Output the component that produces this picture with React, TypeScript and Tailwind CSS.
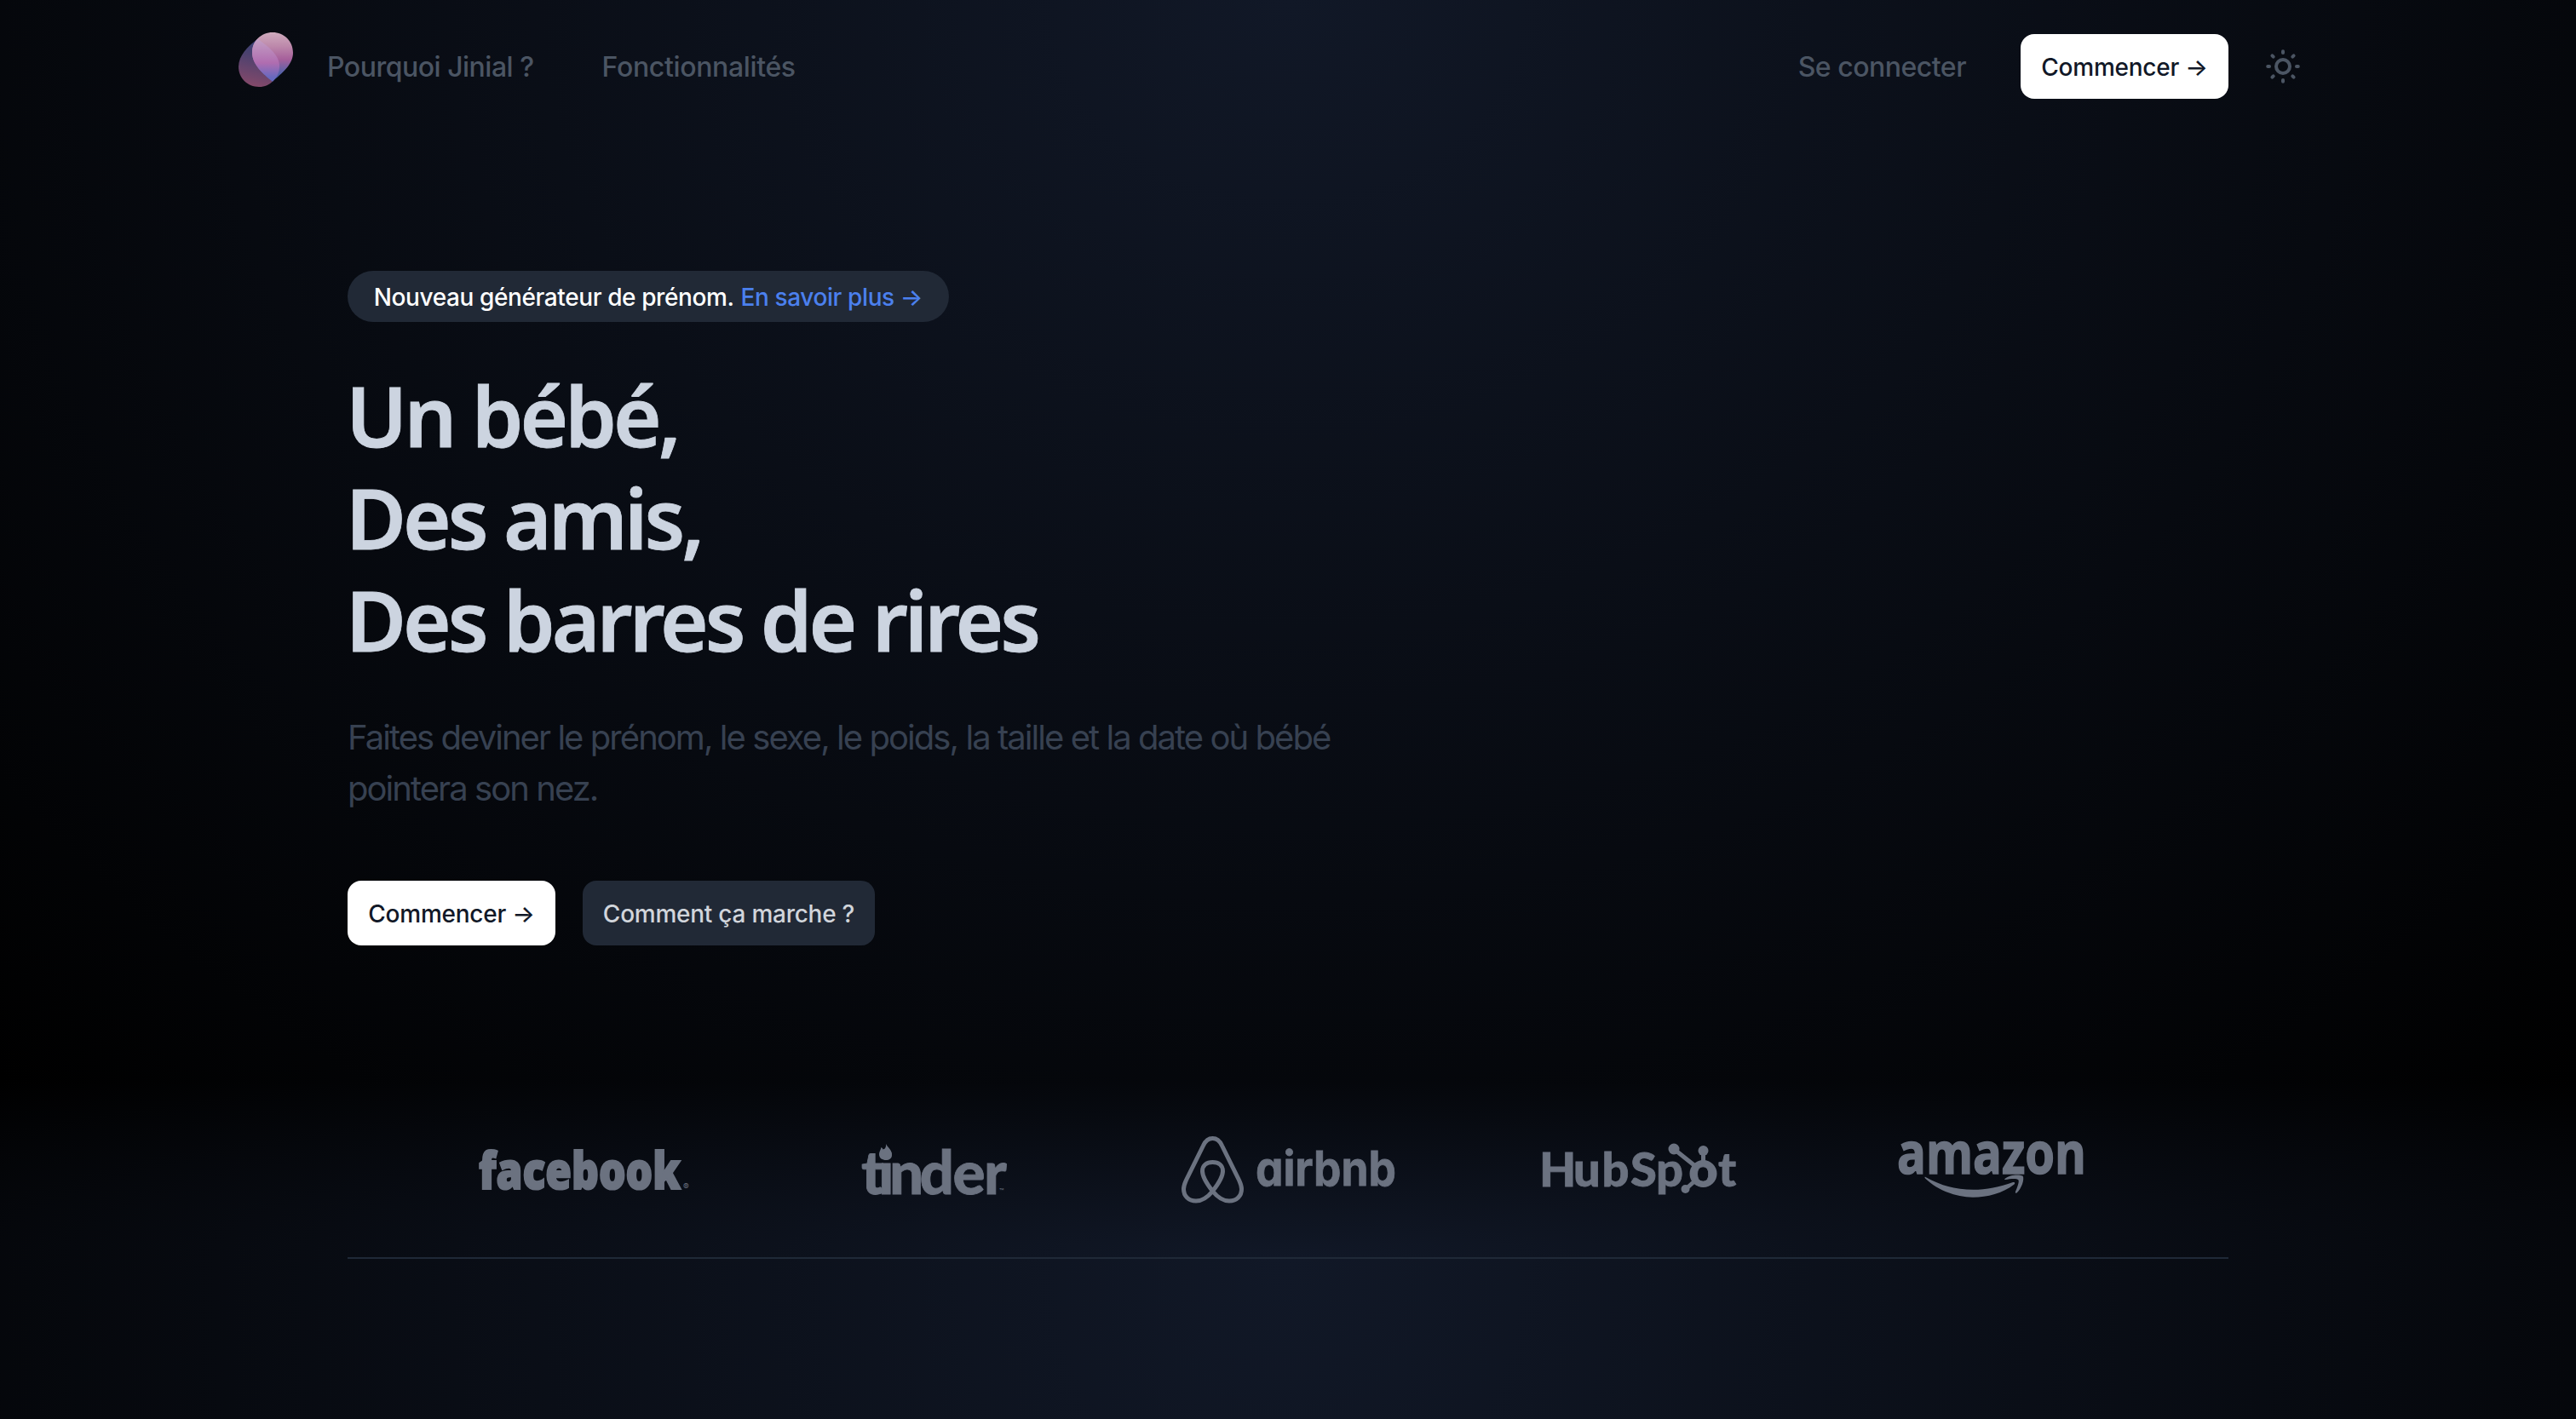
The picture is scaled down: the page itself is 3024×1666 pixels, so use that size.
import React from "react";

function BrandMark() {
  return (
    <svg viewBox="30 24 192 192" className="size-16 shrink-0" aria-label="Jinial">
      <defs>
        <linearGradient id="petal-back" x1="0.6" y1="0" x2="0.4" y2="1">
          <stop offset="0" stopColor="#35437a" />
          <stop offset="0.35" stopColor="#4a416f" />
          <stop offset="1" stopColor="#84496a" />
        </linearGradient>
        <linearGradient id="petal-front" x1="0.5" y1="0" x2="0.5" y2="1">
          <stop offset="0" stopColor="#cfabbd" />
          <stop offset="0.28" stopColor="#bd89ab" />
          <stop offset="0.55" stopColor="#a65f9b" />
          <stop offset="0.8" stopColor="#5c62a8" />
          <stop offset="1" stopColor="#3b5aa5" />
        </linearGradient>
        <linearGradient id="petal-overlap" x1="0.5" y1="0" x2="0.5" y2="1">
          <stop offset="0" stopColor="#c3a0c4" />
          <stop offset="0.5" stopColor="#b06db0" />
          <stop offset="0.8" stopColor="#6869bf" />
          <stop offset="1" stopColor="#5a6cc4" />
        </linearGradient>
        <clipPath id="front-clip">
          <path d="M150 197C118 172 78 138 78 96C78 54 110 24 150 24S222 54 222 96C222 138 182 168 150 197Z" />
        </clipPath>
      </defs>
      <path d="M97 47C62 74 30 106 30 145C30 186 62 216 102 216C124 216 138 208 150 197C164 184 174 168 174 142C174 104 134 72 97 47Z" fill="url(#petal-back)" />
      <path d="M150 197C118 172 78 138 78 96C78 54 110 24 150 24S222 54 222 96C222 138 182 168 150 197Z" fill="url(#petal-front)" />
      <path clipPath="url(#front-clip)" d="M97 47C62 74 30 106 30 145C30 186 62 216 102 216C124 216 138 208 150 197C164 184 174 168 174 142C174 104 134 72 97 47Z" fill="url(#petal-overlap)" />
    </svg>
  );
}

const rayAngles = [0, 45, 90, 135, 180, 225, 270, 315];

function SunIcon() {
  return (
    <svg viewBox="0 0 40 40" className="size-10" fill="none" stroke="currentColor" strokeWidth="4" strokeLinecap="round">
      <circle cx="20" cy="20" r="8" strokeWidth="4" />
      {rayAngles.map((angle) => (
        <path key={angle} d="M20 2.2v1.8" transform={`rotate(${angle} 20 20)`} />
      ))}
    </svg>
  );
}

function FacebookLogo() {
  return (
    <svg viewBox="556 1320 260 100" className="h-[100px] w-[260px] overflow-visible fill-[#6b7280]">
      <text x="562" y="1396" textLength="237" lengthAdjust="spacingAndGlyphs" strokeWidth="2.2" className="stroke-[#6b7280] font-['Open_Sans'] text-[61px] font-extrabold">facebook</text>
      <text x="802" y="1397" className="font-['Inter'] text-[10px]">®</text>
    </svg>
  );
}

function TinderLogo() {
  return (
    <svg viewBox="969 1320 260 100" className="h-[100px] w-[260px] overflow-visible fill-[#6b7280]">
      <text x="1011 1031 1044 1079.500 1118.500 1155" y="1402" strokeWidth="0.8" className="stroke-[#6b7280] font-['Lato'] text-[71px] font-black [font-variant-ligatures:none]">tinder</text>
      <path d="M1040 1343C1042 1347 1047 1350 1047 1356C1047 1360 1044 1362 1040 1362S1032 1360 1032 1355C1032 1352 1034 1350 1034.500 1347C1036 1348 1036.500 1349 1037 1350.500C1039.500 1348 1040.500 1346 1040 1343Z" />
      <text x="1173" y="1402" className="font-['Inter'] text-[9px]">™</text>
    </svg>
  );
}

function AirbnbLogo() {
  return (
    <svg viewBox="1382 1320 260 100" className="h-[100px] w-[260px] overflow-visible fill-[#6b7280]">
      <path
        d="M1423.500 1398.500C1416 1389 1411.500 1381 1411.500 1375C1411.500 1368 1416.500 1364.500 1423.500 1364.500S1435.500 1368 1435.500 1375C1435.500 1381 1431 1389 1423.500 1398.500C1415 1409 1408 1410 1404 1410C1395 1410 1389.500 1404 1389.500 1396C1389.500 1392 1391 1389 1392.500 1385.500L1412.500 1345C1415 1339.500 1418 1336.500 1423.500 1336.500S1432 1339.500 1434.500 1345L1454.500 1385.500C1456 1389 1457.500 1392 1457.500 1396C1457.500 1404 1452 1410 1443 1410C1439 1410 1432 1409 1423.500 1398.500Z"
        fill="none"
        className="stroke-[#6b7280]"
        strokeWidth="5"
      />
      <text x="1474" y="1392" textLength="165" lengthAdjust="spacingAndGlyphs" strokeWidth="0.8" className="stroke-[#6b7280] font-['Inter'] text-[56px] font-bold [font-feature-settings:'cv11']">airbnb</text>
    </svg>
  );
}

function HubSpotLogo() {
  return (
    <svg viewBox="1795 1320 260 100" className="h-[100px] w-[260px] overflow-visible fill-[#6b7280]">
      <text x="1807 1847 1880.500 1914 1944 1983 2017" y="1393" strokeWidth="0.8" className="stroke-[#6b7280] font-['Lato'] text-[56px] font-black">HubSpot</text>
      <path d="M1965 1349L1990 1369M1999.500 1351V1365M1990 1386L1978 1397" fill="none" className="stroke-[#6b7280]" strokeWidth="5" />
      <circle cx="1999.500" cy="1378" r="12.500" fill="none" className="stroke-[#6b7280]" strokeWidth="7" />
      <circle cx="1965" cy="1349" r="6.500" />
      <circle cx="1999.500" cy="1351" r="6" />
      <circle cx="1978.500" cy="1396" r="5" />
    </svg>
  );
}

function AmazonLogo() {
  return (
    <svg viewBox="2208 1320 260 100" className="h-[100px] w-[260px] overflow-visible fill-[#6b7280]">
      <text x="2227" y="1377.500" textLength="222" lengthAdjust="spacingAndGlyphs" strokeWidth="1.6" className="stroke-[#6b7280] font-['Open_Sans'] text-[68px] font-bold">amazon</text>
      <path d="M2260.500 1382C2292 1400 2328 1401 2363 1388C2365 1387.500 2366 1389 2364.500 1390.500C2351 1401 2333 1405.700 2316 1405.700C2294 1405.700 2273 1396 2260 1383.500C2259 1382 2259.500 1381.500 2260.500 1382Z" />
      <path d="M2353.500 1384C2359 1379 2370 1378.500 2374.500 1380.500C2377 1384 2373 1396 2367.500 1400.500C2366 1401 2365.500 1400.500 2366 1399C2368 1394 2370.500 1388 2369.500 1385.500C2367 1383 2359 1384.500 2354 1385C2353 1385 2353 1384.500 2353.500 1384Z" />
    </svg>
  );
}

function PrimaryButton() {
  return (
    <a className="flex h-[76px] w-[244px] items-center justify-center rounded-2xl bg-white pt-0.5 text-[28px] font-medium tracking-[-0.25px] whitespace-nowrap text-[#111827]">
      Commencer →
    </a>
  );
}

export default function App() {
  return (
    <div className="flex h-[1666px] w-[3024px] flex-col overflow-hidden bg-black font-['Inter',sans-serif]">
      <section className="h-[1270px] shrink-0 bg-[radial-gradient(ellipse_at_top,#111827,#000)]">
        <header className="flex h-[156px] items-center pr-[324px] pl-[280px] text-[32px] font-medium tracking-[-0.5px] text-[#4b5563]">
          <div className="-mt-4 flex">
            <BrandMark />
          </div>
          <nav className="ml-10 flex gap-20 pt-0.5 whitespace-nowrap">
            <a>Pourquoi Jinial ?</a>
            <a className="tracking-[-0.35px]">Fonctionnalités</a>
          </nav>
          <div className="ml-auto flex items-center">
            <a className="mr-16 pt-0.5 whitespace-nowrap">Se connecter</a>
            <PrimaryButton />
            <button className="ml-11">
              <SunIcon />
            </button>
          </div>
        </header>
        <main className="mx-auto w-[2208px] pt-[162px]">
          <p className="flex h-[60px] w-[706px] items-center justify-center gap-2 rounded-full bg-[#212936] pt-px text-[28px] font-[450] tracking-[-0.4px] whitespace-nowrap text-white">
            <span>Nouveau générateur de prénom.</span>
            <a className="text-[#4b80ee]">En savoir plus →</a>
          </p>
          <h1 className="mt-[49px] -ml-0.5 font-['Noto_Sans',sans-serif] text-[97px] leading-[120px] font-semibold tracking-[-3.95px] text-[#ccd4e0] [-webkit-text-stroke:0.8px_#ccd4e0]">
            Un bébé,
            <br />
            Des amis,
            <br />
            Des barres de rires
          </h1>
          <p className="mt-[49px] w-[1200px] text-[40px] leading-[60px] tracking-[-1.95px] text-[#374151]">
            Faites deviner le prénom, le sexe, le poids, la taille et la date où bébé pointera son nez.
          </p>
          <div className="mt-[78px] flex gap-8">
            <PrimaryButton />
            <a className="flex h-[76px] w-[343px] items-center justify-center rounded-2xl bg-[#212936] pt-0.5 text-[28px] font-medium tracking-[-0.25px] whitespace-nowrap text-[#d1d5db]">
              Comment ça marche ?
            </a>
          </div>
        </main>
      </section>
      <section className="flex h-[208px] shrink-0 flex-col bg-[radial-gradient(ellipse_at_bottom,#111827,#000)]">
        <div className="mx-auto flex h-full w-[2208px] justify-center border-b-2 border-[#1f2937]">
          <div className="grid w-[2065px] shrink-0 grid-cols-5 justify-items-center pt-[50px]">
            <FacebookLogo />
            <TinderLogo />
            <AirbnbLogo />
            <HubSpotLogo />
            <AmazonLogo />
          </div>
        </div>
      </section>
      <section className="h-[1800px] shrink-0 bg-[radial-gradient(ellipse_at_top,#111827,#000)]" />
    </div>
  );
}
